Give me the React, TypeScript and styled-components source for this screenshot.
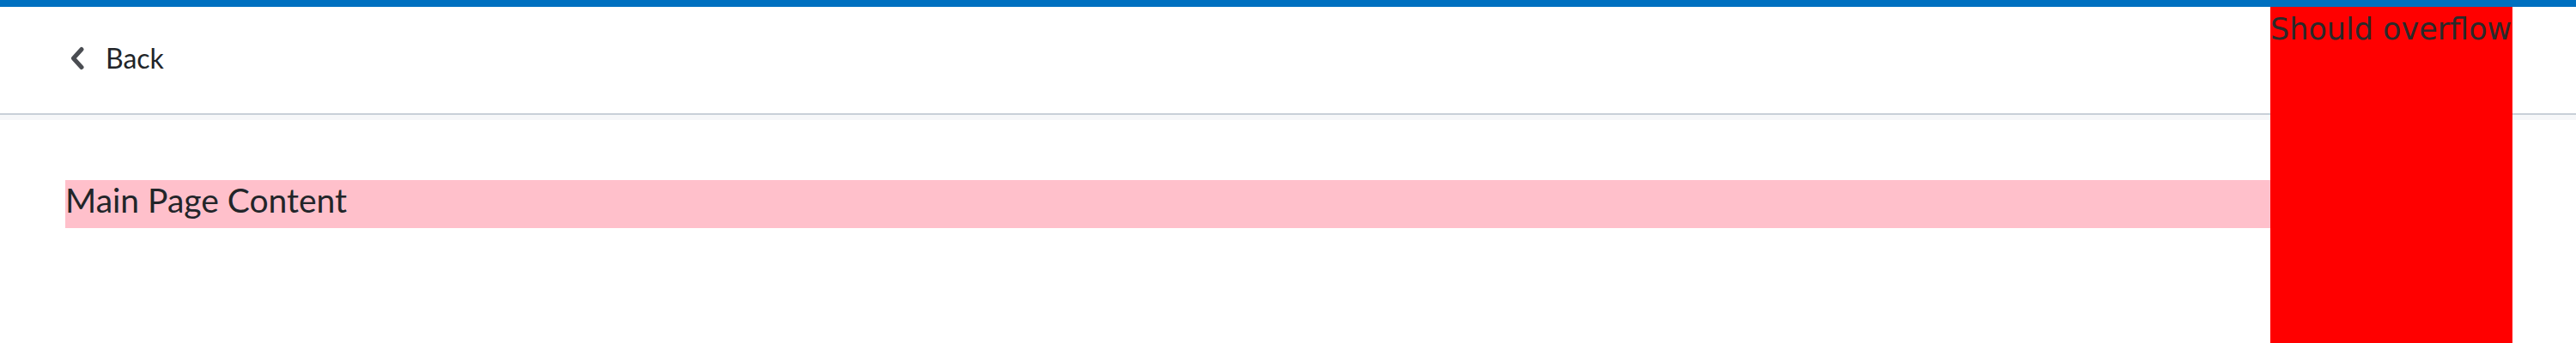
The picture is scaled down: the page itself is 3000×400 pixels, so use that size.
import React from "react";
import styled, { createGlobalStyle } from "styled-components";

const GlobalStyle = createGlobalStyle`
  html, body {
    margin: 0;
    padding: 0;
    background: #fff;
    overflow: hidden;
  }

  body {
    font-family: Lato, "Liberation Sans", sans-serif;
    color: #222529;
  }
`;

const Page = styled.div`
  width: 3000px;
  height: 400px;
  overflow: hidden;
`;

const Header = styled.header`
  position: relative;
  height: 124px;
  border-top: 8px solid #0070c0;
  border-bottom: 2px solid #c8d0d8;
  box-shadow: 0 6px 0 #f6f7f9;
  display: flex;
  align-items: center;
  padding: 0 82px;
`;

const BackLink = styled.a`
  display: flex;
  align-items: center;
  gap: 25px;
  margin-bottom: 4px;
  font-size: 32px;
  line-height: 1;
  color: #222529;
  text-decoration: none;
  cursor: pointer;
`;

const Chevron = styled.svg`
  width: 16px;
  height: 28px;
  flex-shrink: 0;
`;

const Overflowing = styled.div`
  position: absolute;
  top: 0;
  right: 74px;
  width: 282px;
  height: 420px;
  background: #ff0000;
  font-family: "DejaVu Sans", sans-serif;
  font-size: 35px;
  line-height: 1.5;
  color: #2a2a2a;
  white-space: nowrap;
`;

const Main = styled.main`
  padding: 76px 76px 0;
`;

const Content = styled.div`
  height: 56px;
  background: pink;
  font-size: 39px;
  line-height: 47px;
`;

export default function App() {
  return (
    <Page>
      <GlobalStyle />
      <Header>
        <BackLink>
          <Chevron viewBox="0 0 16 28">
            <polyline
              points="13,3.5 3.5,14 13,24.5"
              fill="none"
              stroke="#4a4d52"
              strokeWidth="5"
              strokeLinecap="round"
              strokeLinejoin="round"
            />
          </Chevron>
          Back
        </BackLink>
        <Overflowing>Should overflow</Overflowing>
      </Header>
      <Main>
        <Content>Main Page Content</Content>
      </Main>
    </Page>
  );
}
